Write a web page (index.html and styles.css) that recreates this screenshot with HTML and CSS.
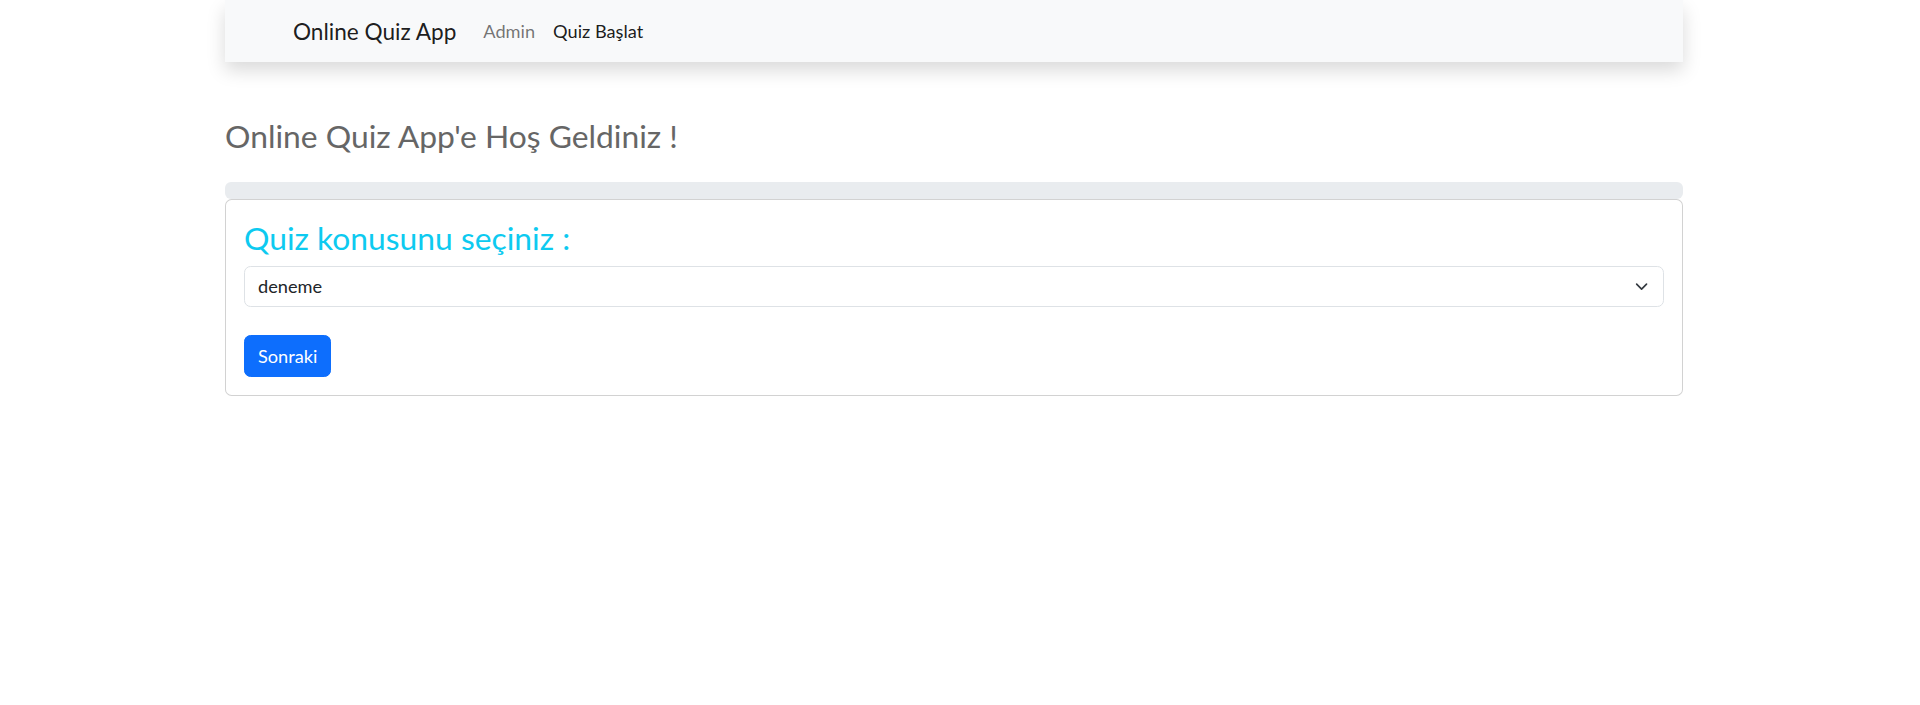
FILE: index.html
```html
<!DOCTYPE html>
<html lang="tr">
<head>
<meta charset="utf-8">
<title>Online Quiz App</title>
<link rel="stylesheet" href="styles.css">
</head>
<body>
<div class="page">
  <nav class="navbar">
    <a class="brand" href="#">Online Quiz App</a>
    <ul class="nav">
      <li><a class="nav-link" href="#">Admin</a></li>
      <li><a class="nav-link active" href="#">Quiz Başlat</a></li>
    </ul>
  </nav>

  <h3 class="welcome">Online Quiz App'e Hoş Geldiniz !</h3>

  <div class="progress"></div>

  <div class="card">
    <div class="card-body">
      <h3 class="card-title">Quiz konusunu seçiniz :</h3>
      <div class="select">
        <span class="select-value">deneme</span>
        <svg class="chevron" viewBox="0 0 16 16" width="13.2" height="13.2"><path d="m2 5 6 6 6-6" fill="none" stroke="#343a40" stroke-width="2" stroke-linecap="round" stroke-linejoin="round"/></svg>
      </div>
      <button class="btn" type="button">Sonraki</button>
    </div>
  </div>
</div>
</body>
</html>
```
FILE: styles.css
```css
html, body {
  margin: 0;
  padding: 0;
  background: #fff;
}
body {
  font-family: "Lato", "Segoe UI", "Open Sans", sans-serif;
  font-size: 18.2px;
  line-height: 1.5;
  color: #212529;
}
.page {
  width: 1458px;
  margin-left: 225px;
}
.navbar {
  height: 62px;
  display: flex;
  align-items: center;
  background: #f8f9fa;
  box-shadow: 0 8.8px 17.6px rgba(0, 0, 0, 0.15);
  padding-left: 68px;
  padding-top: 2px;
  box-sizing: border-box;
}
.brand {
  font-size: 22.6px;
  color: rgba(0, 0, 0, 0.9);
  text-decoration: none;
  margin-right: 18px;
}
.nav {
  list-style: none;
  display: flex;
  margin: 0;
  padding: 0;
}
.nav-link {
  display: block;
  padding: 0 9px;
  color: rgba(0, 0, 0, 0.55);
  text-decoration: none;
}
.nav-link.active {
  color: rgba(0, 0, 0, 0.9);
}
.welcome {
  margin: 56px 0 27px;
  height: 37px;
  font-size: 31.8px;
  font-weight: 400;
  line-height: 37px;
  color: #666;
}
.progress {
  height: 17px;
  background: #e9ecef;
  border-radius: 6px;
}
.card {
  border: 1px solid rgba(0, 0, 0, 0.175);
  border-radius: 6.6px;
  background: #fff;
}
.card-body {
  padding: 19px 18px 18px 18px;
}
.card-title {
  margin: 0 0 10px;
  height: 37px;
  font-size: 31.8px;
  font-weight: 400;
  line-height: 39px;
  color: #0dcaf0;
}
.select {
  height: 41px;
  box-sizing: border-box;
  border: 1px solid #dee2e6;
  border-radius: 6.6px;
  display: flex;
  align-items: center;
  justify-content: space-between;
  padding: 0 15px 0 13px;
  color: #212529;
}
.chevron {
  display: block;
}
.btn {
  display: block;
  margin-top: 28px;
  height: 42px;
  padding: 0 13px;
  font-family: inherit;
  font-size: 18.2px;
  color: #fff;
  background: #0d6efd;
  border: 1px solid #0d6efd;
  border-radius: 6.6px;
}
```
